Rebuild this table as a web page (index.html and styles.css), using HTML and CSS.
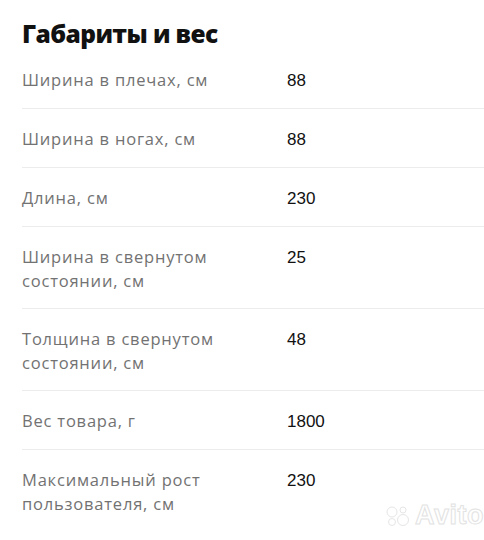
FILE: index.html
```html
<!DOCTYPE html>
<html lang="ru">
<head>
<meta charset="utf-8">
<link rel="stylesheet" href="styles.css">
</head>
<body>
<section class="specs">
  <h2 class="title">Габариты и вес</h2>
  <div class="rows">
    <div class="row"><div class="label">Ширина в плечах, см</div><div class="value">88</div></div>
    <div class="row"><div class="label">Ширина в ногах, см</div><div class="value">88</div></div>
    <div class="row"><div class="label">Длина, см</div><div class="value">230</div></div>
    <div class="row"><div class="label">Ширина в свернутом<br>состоянии, см</div><div class="value">25</div></div>
    <div class="row"><div class="label">Толщина в свернутом<br>состоянии, см</div><div class="value">48</div></div>
    <div class="row"><div class="label">Вес товара, г</div><div class="value">1800</div></div>
    <div class="row"><div class="label">Максимальный рост<br>пользователя, см</div><div class="value">230</div></div>
  </div>
</section>
<div class="watermark">
  <svg class="wm-logo" width="26" height="22" viewBox="0 0 26 22">
    <circle cx="6" cy="7" r="5"/>
    <circle cx="17" cy="5" r="3"/>
    <circle cx="6" cy="17" r="3.5"/>
    <circle cx="17" cy="15" r="5.5"/>
  </svg>
  <span class="wm-text">Avito</span>
</div>
</body>
</html>
```
FILE: styles.css
```css
html, body {
  margin: 0;
  padding: 0;
  background: #ffffff;
}
body {
  width: 484px;
  height: 540px;
  overflow: hidden;
  position: relative;
  font-family: "Open Sans", "Liberation Sans", sans-serif;
}
.specs {
  padding: 18px 0 0 22px;
}
.title {
  margin: 0 0 18px 0;
  font-family: "Open Sans", sans-serif;
  font-weight: 800;
  font-size: 24.5px;
  line-height: 32px;
  color: #111111;
  letter-spacing: -0.6px;
}
.rows {
  display: flex;
  flex-direction: column;
}
.row {
  display: grid;
  grid-template-columns: 265px 1fr;
  align-items: baseline;
  padding: 18px 0 15px 0;
  border-top: 1px solid #ececec;
}
.row:first-child {
  border-top: none;
  padding-top: 0;
}
.label {
  font-size: 16.5px;
  line-height: 24px;
  color: #727272;
  letter-spacing: 0.8px;
}
.value {
  font-family: "Liberation Sans", sans-serif;
  font-size: 17px;
  line-height: 24px;
  color: #111111;
}
.watermark {
  position: absolute;
  left: 386px;
  top: 500px;
  display: flex;
  align-items: center;
  gap: 3px;
  opacity: 0.9;
}
.wm-logo circle {
  fill: #ffffff;
  stroke: #e4e4e4;
  stroke-width: 1;
}
.wm-text {
  font-family: "Liberation Sans", sans-serif;
  font-weight: 700;
  font-size: 27px;
  color: #ffffff;
  -webkit-text-stroke: 1px #e0e0e0;
  letter-spacing: 0.5px;
}
```
